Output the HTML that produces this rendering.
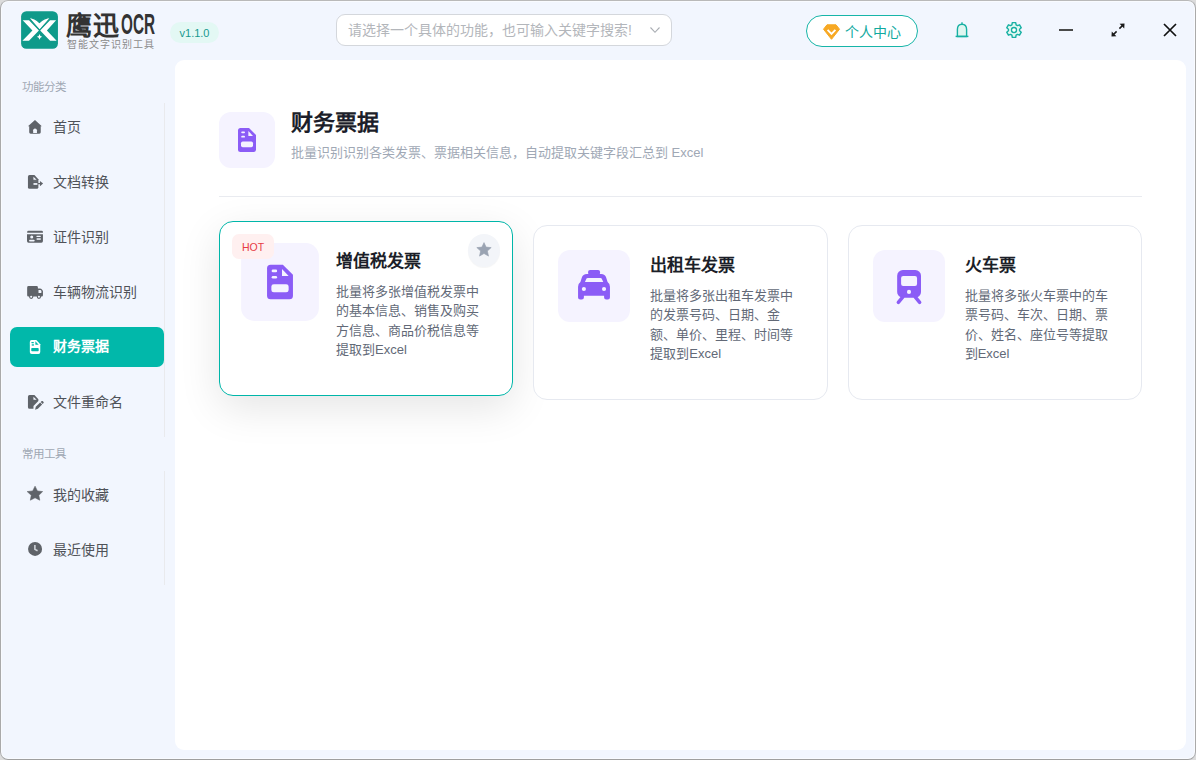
<!DOCTYPE html>
<html lang="zh-CN"><head><meta charset="utf-8">
<style>
*{margin:0;padding:0;box-sizing:border-box}
html,body{width:1196px;height:760px;overflow:hidden;background:#dcdcdc;font-family:"Liberation Sans",sans-serif}
.win{position:absolute;left:0;top:0;width:1196px;height:760px;background:#f2f6fe;border-radius:8px;overflow:hidden}
.frame{position:absolute;left:0;top:0;width:1196px;height:760px;border:1px solid #aaaaaa;border-top-color:#b9b9b9;border-bottom-color:#9f9f9f;border-radius:8px;pointer-events:none;box-shadow:inset 0 0 0 1px rgba(250,252,255,0.8)}
.abs{position:absolute}
svg{position:absolute;overflow:visible}
.brand{left:66px;top:5px;font-size:26px;font-weight:bold;color:#333;white-space:nowrap;letter-spacing:1px}
.ocr{left:121px;top:6.5px;font-size:30px;font-weight:bold;color:#333;white-space:nowrap;transform:scaleX(0.51);transform-origin:0 0}
.brandsub{left:67px;top:36px;font-size:10px;color:#8b8b8b;letter-spacing:1px;white-space:nowrap}
.ver{left:170px;top:22px;width:49px;height:21px;border-radius:10.5px;background:#e3f8f4;color:#17988f;font-size:11px;text-align:center;line-height:23px}
.search{left:336px;top:14px;width:336px;height:32px;border:1px solid #d4d7dc;border-radius:9px;background:#fff}
.search span{position:absolute;left:11px;top:4px;font-size:14px;color:#b3b6bb;white-space:nowrap}
.vip{left:806px;top:15px;width:112px;height:32px;border:1.5px solid #17b5a8;border-radius:16px;background:#fff}
.vip span{position:absolute;left:38px;top:4.5px;font-size:14px;color:#10a99e;white-space:nowrap}
.side-h{font-size:11.5px;font-weight:500;color:#9fa7b3;white-space:nowrap}
.nav{left:10px;width:154px;height:40px;border-radius:7px}
.nav .t{position:absolute;left:43px;top:8.7px;font-size:14px;color:#4f5258;white-space:nowrap}
.nav.act{background:#01b8aa}
.nav.act .t{color:#fff;font-weight:bold;top:8px}
.vline{left:164px;width:1px;background:#e9eaed}
.panel{left:175px;top:60px;width:1011px;height:690px;background:#fff;border-radius:9px}
.hicon{left:44px;top:52px;width:56px;height:56px;border-radius:12px;background:#f5f3ff}
.htitle{left:116px;top:43.7px;font-size:22px;font-weight:bold;color:#1c1e2a;white-space:nowrap}
.hsub{left:116px;top:82.2px;font-size:13px;color:#a0a8b5;white-space:nowrap}
.hr{left:44px;top:136px;width:923px;height:1px;background:#e9ebf0}
.card{width:294.33px;height:175px;border:1px solid #e6e9f0;border-radius:14px;background:#fff}
.card .ib{position:absolute;left:24px;top:24px;width:72px;height:72px;border-radius:12px;background:#f5f3ff}
.card .ct{position:absolute;left:116px;top:24.7px;font-size:17px;font-weight:bold;color:#1b1e28;white-space:nowrap}
.card .cd{position:absolute;left:116px;top:60px;width:150px;font-size:13px;line-height:19.4px;color:#626977}
.hov{border-color:#00b6a9;box-shadow:0 12px 42px rgba(0,0,0,0.105)}
.hot{left:12px;top:12px;width:42px;height:25px;border-radius:7px;background:#fff0f0;color:#e73b46;font-size:10.5px;line-height:26px;text-align:center}
.fav{left:248px;top:12px;width:32px;height:33px;border-radius:50%;background:#f3f5f9;box-shadow:0 1px 1px rgba(0,0,0,0.04)}
</style></head><body>
<div class="win">
  <!-- logo -->
  <svg style="left:19px;top:10px" width="40" height="40" viewBox="0 0 760 760">
    <rect x="40" y="25" width="700" height="710" rx="100" fill="#0f9a8a"/>
    <path d="M70,195 L190,195 L378,390 L190,585 L65,585 L255,390 Z" fill="#fff"/>
    <path d="M705,195 L590,195 L402,390 L590,585 L715,585 L530,390 Z" fill="#fff"/>
    <path d="M180,140 Q305,145 388,238 Q472,145 605,140 L392,380 Z" fill="#fff" stroke="#0f9a8a" stroke-width="20" stroke-linejoin="miter"/>
    <path d="M390,455 Q398,500 440,510 Q398,520 390,565 Q382,520 340,510 Q382,500 390,455Z" fill="#fff"/>
  </svg>
  <div class="abs brand">鹰迅</div>
  <div class="abs ocr">OCR</div>
  <div class="abs brandsub">智能文字识别工具</div>
  <div class="abs ver">v1.1.0</div>
  <div class="abs search"><span>请选择一个具体的功能，也可输入关键字搜索!</span>
    <svg style="left:313px;top:12px" width="10" height="6" viewBox="0 0 10 6"><path d="M0.5,0.5 L5,5.3 L9.5,0.5" fill="none" stroke="#a9adb3" stroke-width="1.1"/></svg>
  </div>
  <div class="abs vip"><span>个人中心</span>
    <svg style="left:16px;top:8px" width="17" height="16" viewBox="0 0 17 16">
      <path d="M4,0.8 H13 L16.5,5.2 L8.5,15.3 L0.5,5.2 Z" fill="#f7a823" stroke="#f7a823" stroke-width="1" stroke-linejoin="round"/>
      <path d="M4.6,5.8 L8.5,9.8 L12.4,5.8" fill="none" stroke="#fff" stroke-width="1.9"/>
    </svg>
  </div>
  <!-- bell -->
  <svg style="left:955px;top:21px" width="14" height="18" viewBox="0 0 14 18">
    <path d="M2.4,15.5 V8.5 Q2.4,3.2 7,3.2 Q11.6,3.2 11.6,8.5 V15.5 Z" fill="#dff6f0" stroke="#17b0a3" stroke-width="1.4"/>
    <path d="M0.6,15.4 H13.4" stroke="#17b0a3" stroke-width="1.4"/>
    <path d="M7,1.2 V3" stroke="#17b0a3" stroke-width="1.3"/>
    <path d="M5.6,16.4 Q7,18 8.4,16.4Z" fill="#a4e2d8"/>
  </svg>
  <!-- gear -->
  <svg style="left:1006px;top:22px" width="16" height="16" viewBox="-8 -8 16 16">
    <path d="M-2.10,-5.19 L-1.71,-7.41 L1.71,-7.41 L2.10,-5.19 L3.45,-4.41 L5.56,-5.18 L7.27,-2.22 L5.55,-0.78 L5.55,0.78 L7.27,2.22 L5.56,5.18 L3.45,4.41 L2.10,5.19 L1.71,7.41 L-1.71,7.41 L-2.10,5.19 L-3.45,4.41 L-5.56,5.18 L-7.27,2.22 L-5.55,0.78 L-5.55,-0.78 L-7.27,-2.22 L-5.56,-5.18 L-3.45,-4.41Z" fill="#e3f7f2" stroke="#17b0a3" stroke-width="1.4" stroke-linejoin="round"/>
    <circle cx="0" cy="0" r="2.5" fill="#fff" stroke="#17b0a3" stroke-width="1.4"/>
  </svg>
  <!-- minimize -->
  <div class="abs" style="left:1059px;top:29px;width:14px;height:2px;background:#4a4a4a"></div>
  <!-- maximize -->
  <svg style="left:1110px;top:22px" width="16" height="16" viewBox="0 0 16 16">
    <path d="M3.2,12.8 L6.6,9.4 M9.4,6.6 L12.8,3.2" stroke="#1a1a1a" stroke-width="1.6"/>
    <path d="M1.5,14.5 L1.8,9.6 L6.4,14.2 Z" fill="#1a1a1a"/>
    <path d="M14.5,1.5 L14.2,6.4 L9.6,1.8 Z" fill="#1a1a1a"/>
  </svg>
  <!-- close -->
  <svg style="left:1163px;top:23px" width="14" height="14" viewBox="0 0 14 14">
    <path d="M1,1 L13,13 M13,1 L1,13" stroke="#111" stroke-width="1.7"/>
  </svg>

  <!-- sidebar -->
  <div class="abs side-h" style="left:22px;top:78px">功能分类</div>
  <div class="abs vline" style="top:103px;height:334px"></div>
  <div class="abs nav" style="top:107px"><span class="t">首页</span></div>
  <div class="abs nav" style="top:162px"><span class="t">文档转换</span></div>
  <div class="abs nav" style="top:217px"><span class="t">证件识别</span></div>
  <div class="abs nav" style="top:272px"><span class="t">车辆物流识别</span></div>
  <div class="abs nav act" style="top:327px"><span class="t">财务票据</span></div>
  <div class="abs nav" style="top:382px"><span class="t">文件重命名</span></div>
  <div class="abs side-h" style="left:22px;top:445px">常用工具</div>
  <div class="abs vline" style="top:471px;height:114px"></div>
  <div class="abs nav" style="top:475px"><span class="t">我的收藏</span></div>
  <div class="abs nav" style="top:530px"><span class="t">最近使用</span></div>

  <!-- sidebar icons (24x24 regions, 760 units) -->
  <svg style="left:24px;top:115px" width="24" height="24" viewBox="0 0 760 760" fill="#5f6369">
    <path d="M348,160 L565,360 L530,360 L530,545 Q530,590 485,590 L210,590 Q165,590 165,545 L165,360 L125,360 Z"/>
    <path d="M290,570 V480 Q290,430 348,430 Q410,430 410,480 V570 Z" fill="#f2f6fe"/>
  </svg>
  <svg style="left:24px;top:170px" width="24" height="24" viewBox="0 0 760 760" fill="#5f6369">
    <path d="M175,160 H330 L455,290 V545 Q455,595 405,595 H175 Q125,595 125,545 V210 Q125,160 175,160 Z"/>
    <path d="M298,212 L298,305 L400,305 Z" fill="#f2f6fe"/>
    <rect x="300" y="415" width="125" height="55" fill="#f2f6fe"/>
    <rect x="295" y="340" width="130" height="16" fill="#878a90"/>
    <path d="M440,410 H520 V450 H440 Z"/>
    <path d="M505,345 L605,430 L505,515 Z"/>
  </svg>
  <svg style="left:24px;top:225px" width="24" height="24" viewBox="0 0 760 760" fill="#5f6369">
    <path d="M140,185 H560 Q600,185 600,225 V245 H100 V225 Q100,185 140,185 Z"/>
    <path d="M95,290 H600 V510 Q600,560 550,560 H145 Q95,560 95,510 Z"/>
    <circle cx="245" cy="378" r="48" fill="#f2f6fe"/>
    <rect x="160" y="465" width="178" height="55" rx="27" fill="#f2f6fe"/>
    <rect x="390" y="340" width="145" height="40" rx="20" fill="#f2f6fe"/>
    <rect x="400" y="420" width="130" height="48" fill="#f2f6fe"/>
  </svg>
  <svg style="left:24px;top:280px" width="24" height="24" viewBox="0 0 760 760" fill="#5f6369">
    <path d="M145,190 H400 Q440,190 440,230 V270 H500 Q545,270 575,310 L600,345 V480 Q600,520 560,520 H140 Q100,520 100,480 V235 Q100,190 145,190 Z"/>
    <path d="M460,320 H515 Q550,320 550,355 V410 H460 Z" fill="#f2f6fe"/>
    <circle cx="228" cy="530" r="68"/>
    <circle cx="472" cy="530" r="68"/>
    <circle cx="228" cy="530" r="34" fill="#f2f6fe"/>
    <circle cx="472" cy="530" r="34" fill="#f2f6fe"/>
  </svg>
  <!-- active doc (white) -->
  <svg style="left:24px;top:335px" width="24" height="24" viewBox="0 0 760 760">
    <path d="M240,160 H390 L515,290 V540 Q515,600 455,600 H245 Q185,600 185,540 V220 Q185,160 240,160 Z" fill="#fff"/>
    <path d="M360,200 L360,310 L465,310 Z" fill="#01b8aa"/>
    <rect x="230" y="218" width="85" height="40" rx="20" fill="#01b8aa"/>
    <rect x="245" y="290" width="70" height="50" fill="#01b8aa" opacity="0.85"/>
    <rect x="230" y="412" width="235" height="100" rx="25" fill="#01b8aa"/>
  </svg>
  <svg style="left:24px;top:390px" width="24" height="24" viewBox="0 0 760 760" fill="#5f6369">
    <path d="M175,160 H330 L455,290 V350 L300,510 V595 H175 Q125,595 125,545 V210 Q125,160 175,160 Z"/>
    <path d="M298,212 L298,305 L400,305 Z" fill="#f2f6fe"/>
    <path d="M350,625 L375,530 L510,395 L575,460 L440,595 Z"/>
    <path d="M530,380 L560,350 Q575,340 590,350 L620,380 Q630,395 620,410 L590,440 Z"/>
  </svg>
  <svg style="left:24px;top:483px" width="24" height="24" viewBox="0 0 760 760" fill="#5f6369">
    <path d="M350,100 L425,250 L590,272 L470,390 L500,545 L350,470 L200,545 L230,390 L100,272 L275,250 Z" stroke="#5f6369" stroke-width="18" stroke-linejoin="round"/>
  </svg>
  <svg style="left:24px;top:538px" width="24" height="24" viewBox="0 0 760 760">
    <circle cx="350" cy="345" r="222" fill="#5f6369"/>
    <path d="M345,225 V360 L430,405" fill="none" stroke="#cfd3d9" stroke-width="50" stroke-linejoin="miter"/>
  </svg>

  <!-- main panel -->
  <div class="abs panel">
    <div class="abs hicon"></div>
    <svg style="left:63px;top:68px" width="18" height="24" viewBox="0 0 18 24">
      <path d="M2.5,0 H11 L18,7 V21.5 Q18,24 15.5,24 H2.5 Q0,24 0,21.5 V2.5 Q0,0 2.5,0 Z" fill="#8b5cf6"/>
      <path d="M10.4,3 V7.9 H15 Z" fill="#f5f3ff"/>
      <rect x="3.2" y="3.4" width="3.8" height="1.8" rx="0.9" fill="#f5f3ff"/>
      <rect x="3.2" y="7.8" width="3.8" height="1.8" rx="0.9" fill="#f5f3ff"/>
      <rect x="3" y="13.6" width="12" height="5.6" rx="1.7" fill="#f5f3ff"/>
    </svg>
    <div class="abs htitle">财务票据</div>
    <div class="abs hsub">批量识别识别各类发票、票据相关信息，自动提取关键字段汇总到 Excel</div>
    <div class="abs hr"></div>

    <div class="abs card hov" style="left:44px;top:161px">
      <div class="ib" style="transform:scale(1.08)">
        <svg style="left:24px;top:20px" width="24" height="32" viewBox="0 0 18 24">
          <path d="M2.5,0 H11 L18,7 V21.5 Q18,24 15.5,24 H2.5 Q0,24 0,21.5 V2.5 Q0,0 2.5,0 Z" fill="#8b5cf6"/>
          <path d="M10.4,3 V7.9 H15 Z" fill="#f5f3ff"/>
          <rect x="3.2" y="3.4" width="3.8" height="1.8" rx="0.9" fill="#f5f3ff"/>
          <rect x="3.2" y="7.8" width="3.8" height="1.8" rx="0.9" fill="#f5f3ff"/>
          <rect x="3" y="13.6" width="12" height="5.6" rx="1.7" fill="#f5f3ff"/>
        </svg>
      </div>
      <div class="abs hot">HOT</div>
      <div class="abs fav">
        <svg style="left:8px;top:8px" width="16" height="15" viewBox="0 0 16 15">
          <path d="M8,0.6 L10.1,5.1 L15.2,5.6 L11.4,9 L12.5,14.1 L8,11.5 L3.5,14.1 L4.6,9 L0.8,5.6 L5.9,5.1 Z" fill="#9aa3b2" stroke="#9aa3b2" stroke-width="0.6" stroke-linejoin="round"/>
        </svg>
      </div>
      <div class="ct">增值税发票</div>
      <div class="cd">批量将多张增值税发票中的基本信息、销售及购买方信息、商品价税信息等提取到Excel</div>
    </div>
    <div class="abs card" style="left:358.33px;top:165px">
      <div class="ib">
        <svg style="left:6px;top:6px" width="60" height="60" viewBox="0 0 760 760" fill="#8b5cf6">
          <rect x="305" y="178" width="152" height="62" rx="25"/>
          <path d="M290,228 H470 Q520,228 535,275 L552,330 Q582,350 582,390 V525 Q582,552 555,552 H535 Q508,552 508,525 V505 H252 V525 Q252,552 225,552 H205 Q178,552 178,525 V390 Q178,350 208,330 L225,275 Q240,228 290,228 Z"/>
          <path d="M265,330 L285,285 Q290,278 300,278 H462 Q472,278 477,285 L497,330 Z" fill="#f5f3ff"/>
          <circle cx="252" cy="418" r="26" fill="#f5f3ff"/>
          <circle cx="507" cy="418" r="26" fill="#f5f3ff"/>
        </svg>
      </div>
      <div class="ct">出租车发票</div>
      <div class="cd">批量将多张出租车发票中的发票号码、日期、金额、单价、里程、时间等提取到Excel</div>
    </div>
    <div class="abs card" style="left:672.67px;top:165px">
      <div class="ib">
        <svg style="left:6px;top:6px" width="60" height="60" viewBox="0 0 760 760" fill="#8b5cf6">
          <rect x="230" y="178" width="302" height="350" rx="72"/>
          <rect x="280" y="253" width="202" height="128" rx="26" fill="#f5f3ff"/>
          <circle cx="380" cy="455" r="26" fill="#f5f3ff"/>
          <path d="M300,520 L245,588 M460,520 L515,588" stroke="#8b5cf6" stroke-width="44" stroke-linecap="round"/>
        </svg>
      </div>
      <div class="ct">火车票</div>
      <div class="cd">批量将多张火车票中的车票号码、车次、日期、票价、姓名、座位号等提取到Excel</div>
    </div>
  </div>
</div>
<div class="frame"></div>
</body></html>
